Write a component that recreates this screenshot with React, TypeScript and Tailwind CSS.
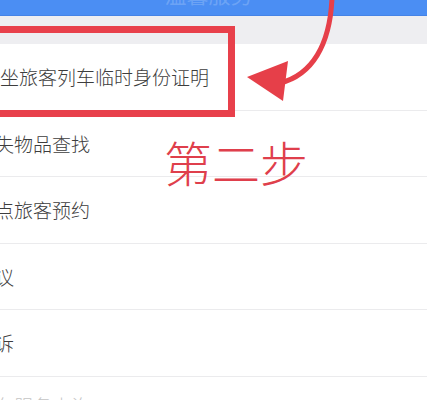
import React from "react";

const rows: { text: string; offset: string }[] = [
  { text: "乘坐旅客列车临时身份证明", offset: "-ml-[19px]" },
  { text: "遗失物品查找", offset: "-ml-[24px]" },
  { text: "重点旅客预约", offset: "-ml-[24px]" },
  { text: "建议", offset: "-ml-[24px]" },
  { text: "投诉", offset: "-ml-[24px]" },
];

export default function App() {
  return (
    <div
      className="relative w-[427px] h-[400px] overflow-hidden bg-white"
      style={{ fontFamily: '"Noto Sans CJK SC", "Noto Sans", sans-serif' }}
    >
      <div className="h-[16px] bg-[#4b8ef3] border-b border-[#4583e6] flex justify-center overflow-hidden">
        <span className="text-[22px] leading-none text-white/20 -mt-[18px] ml-[-10px]">温馨服务</span>
      </div>
      <div className="h-[28px] bg-[#eeeef1]" />
      <div className="flex flex-col">
        {rows.map((r, i) => (
          <div
            key={i}
            className="h-[66.5px] flex items-center border-b border-[#ebebed] text-[19px] text-[#3d3d3d] shrink-0"
          >
            <span className={`${r.offset} whitespace-nowrap leading-none font-light`}>{r.text}</span>
          </div>
        ))}
        <div className="h-[66.5px] flex items-start pt-[19px] text-[19px] text-[#c4c4c4] shrink-0">
          <span className="-ml-[24px] whitespace-nowrap leading-none font-light">站车服务查询</span>
        </div>
      </div>

      {/* red highlight box */}
      <div className="absolute left-[-12px] top-[26px] w-[247px] h-[91px] border-[7px] border-[#e8404b]" />

      {/* arrow */}
      <svg className="absolute left-0 top-0" width="427" height="400" viewBox="0 0 427 400">
        <path
          d="M332 -2 C330 45 312 75 280 83"
          fill="none"
          stroke="#e63f49"
          strokeWidth="5"
          strokeLinecap="round"
        />
        <polygon points="247,77 288,61 283,101" fill="#e63f49" />
      </svg>

      {/* step label */}
      <div className="absolute left-[164px] top-[137px] text-[48px] leading-none text-[#df3f4c] whitespace-nowrap font-light">
        第二步
      </div>
    </div>
  );
}
